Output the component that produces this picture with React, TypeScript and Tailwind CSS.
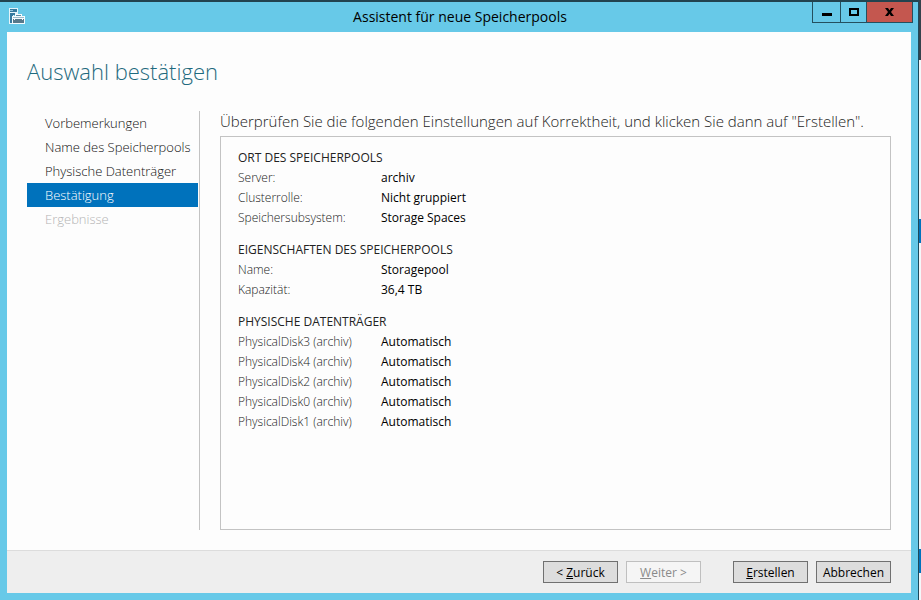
import clsx from 'clsx';

type StepState = 'done' | 'current' | 'disabled';

const steps: { label: string; state: StepState }[] = [
  { label: 'Vorbemerkungen', state: 'done' },
  { label: 'Name des Speicherpools', state: 'done' },
  { label: 'Physische Datenträger', state: 'done' },
  { label: 'Bestätigung', state: 'current' },
  { label: 'Ergebnisse', state: 'disabled' },
];

const sections = [
  {
    title: 'ORT DES SPEICHERPOOLS',
    rows: [
      ['Server:', 'archiv'],
      ['Clusterrolle:', 'Nicht gruppiert'],
      ['Speichersubsystem:', 'Storage Spaces'],
    ],
  },
  {
    title: 'EIGENSCHAFTEN DES SPEICHERPOOLS',
    rows: [
      ['Name:', 'Storagepool'],
      ['Kapazität:', '36,4 TB'],
    ],
  },
  {
    title: 'PHYSISCHE DATENTRÄGER',
    rows: [
      ['PhysicalDisk3 (archiv)', 'Automatisch'],
      ['PhysicalDisk4 (archiv)', 'Automatisch'],
      ['PhysicalDisk2 (archiv)', 'Automatisch'],
      ['PhysicalDisk0 (archiv)', 'Automatisch'],
      ['PhysicalDisk1 (archiv)', 'Automatisch'],
    ],
  },
];

function ServerIcon() {
  return (
    <svg viewBox="0 0 16 16" className="h-4 w-4" shapeRendering="crispEdges" aria-hidden="true">
      {/* server tower */}
      <path d="M0 0h9v6H5v10H0z" fill="#e4f4fa" />
      <path d="M1 1h7v3H1zM1 5h5v2H4v2H3v6H1z" fill="#357a9f" />
      <path d="M1 2h3v1H1z" fill="#8fc3dc" />
      {/* toolbox */}
      <path d="M6 6h7v2h3v8H3V8h3z" fill="#f4fbfe" />
      <path d="M7 7h5v1H7z" fill="#5f8da3" />
      <path d="M4 9h11v1H4z" fill="#9dbccb" />
      <path d="M4 11h1v1h1v-1h7v1h1v-1h1v4H4z" fill="#57798a" />
    </svg>
  );
}

function TitleBar() {
  return (
    <header className="-mr-0.5 grid h-[30px] shrink-0 grid-cols-[1fr_auto_1fr] items-start">
      <div className="pt-1.5 pl-0.5">
        <ServerIcon />
      </div>
      <h1 className="text-[14px] leading-[30px] text-black">Assistent für neue Speicherpools</h1>
      <div className="flex h-[21px] justify-self-end border border-t-0 border-[#24505f]">
        <button type="button" aria-label="Minimieren" className="flex w-[27px] items-center justify-center">
          <svg viewBox="0 0 10 3" className="mt-1 h-[3px] w-[10px]" shapeRendering="crispEdges">
            <path d="M0 0h10v3H0z" />
          </svg>
        </button>
        <button
          type="button"
          aria-label="Maximieren"
          className="flex w-[26px] items-center justify-center border-l border-[#24505f]"
        >
          <svg viewBox="0 0 10 8" className="h-2 w-[10px]" shapeRendering="crispEdges">
            <path d="M0 0h10v8H0zM2 2v4h6V2z" fillRule="evenodd" />
          </svg>
        </button>
        <button
          type="button"
          aria-label="Schließen"
          className="flex w-[46px] items-center justify-center border-l border-[#24505f] bg-[#c4574f]"
        >
          <svg viewBox="0 0 9 8" className="h-2 w-[9px]">
            <path d="M0 0h3l1.5 2.2L6 0h3L6 4l3 4H6L4.5 5.8 3 8H0l3-4z" />
          </svg>
        </button>
      </div>
    </header>
  );
}

function StepList() {
  return (
    <nav className="w-[173px] shrink-0 border-r border-[#c3c3c3] pr-px">
      <ol>
        {steps.map((step) => (
          <li
            key={step.label}
            aria-current={step.state === 'current' ? 'step' : undefined}
            className={clsx(
              'h-6 pl-[18px] text-[13px] leading-6 font-light whitespace-nowrap',
              step.state === 'done' && 'text-[#111]',
              step.state === 'current' && 'bg-[#0072bc] text-white',
              step.state === 'disabled' && 'text-[#b4b4b4]',
            )}
          >
            {step.label}
          </li>
        ))}
      </ol>
    </nav>
  );
}

function Summary() {
  return (
    <div className="flex grow flex-col gap-3 border border-[#c3c3c3] px-[17px] py-[11px] text-[12px] leading-5">
      {sections.map((section) => (
        <section key={section.title}>
          <h3 className="text-[#222]">{section.title}</h3>
          <dl className="grid grid-cols-[143px_1fr]">
            {section.rows.map(([name, value]) => (
              <div key={name} className="col-span-2 grid grid-cols-subgrid">
                <dt className="font-light whitespace-nowrap text-[#222]">{name}</dt>
                <dd className="text-black">{value}</dd>
              </div>
            ))}
          </dl>
        </section>
      ))}
    </div>
  );
}

const buttonStyle =
  'h-[22px] w-[75px] border border-[#707070] bg-[#dddddd] pt-0.5 text-center text-[12px] leading-[18px] whitespace-nowrap text-black disabled:border-[#bfbfbf] disabled:bg-[#f5f5f5] disabled:text-[#8a8a8a]';

function Footer() {
  return (
    <footer className="flex shrink-0 justify-end gap-8 border-t border-[#dcdcdc] bg-[#eeeeee] py-2.5 pr-5">
      <div className="flex gap-2">
        <button type="button" className={buttonStyle}>
          &lt; <u>Z</u>urück
        </button>
        <button type="button" disabled className={buttonStyle}>
          <u>W</u>eiter &gt;
        </button>
      </div>
      <div className="flex gap-2">
        <button type="button" className={buttonStyle}>
          <u>E</u>rstellen
        </button>
        <button type="button" className={buttonStyle}>
          Abbrechen
        </button>
      </div>
    </footer>
  );
}

// Sliver of the server manager window that shows beside the dialog.
function BackgroundEdge() {
  return (
    <div className="flex w-[3px] shrink-0 flex-col border-l border-[#1d4a5c] bg-[#f4f8fa]">
      <div className="h-[60px] bg-[#35424c]" />
      <div className="mt-[159px] h-6 bg-[#0072bc]" />
      <div className="mt-[306px] h-6 bg-[#0072bc]" />
    </div>
  );
}

export default function App() {
  return (
    <div className="flex min-h-screen font-['Open_Sans','Noto_Sans',sans-serif]">
      <div className="flex grow flex-col border-t-2 border-[#22434f] bg-[#67c9e8] px-[7px] pb-[7px]">
        <TitleBar />
        <main className="flex grow flex-col bg-[#fdfdfd]">
          <div className="flex grow flex-col px-5 pt-[23px] pb-5">
            <h2 className="text-[22px] leading-8 font-light text-[#1f6a7e]">Auswahl bestätigen</h2>
            <div className="mt-6 flex grow gap-5">
              <StepList />
              <div className="flex grow flex-col">
                <p className="mb-1 text-[15px] leading-[21px] font-light text-[#222]">
                  Überprüfen Sie die folgenden Einstellungen auf Korrektheit, und klicken Sie dann auf "Erstellen".
                </p>
                <Summary />
              </div>
            </div>
          </div>
          <Footer />
        </main>
      </div>
      <BackgroundEdge />
    </div>
  );
}
